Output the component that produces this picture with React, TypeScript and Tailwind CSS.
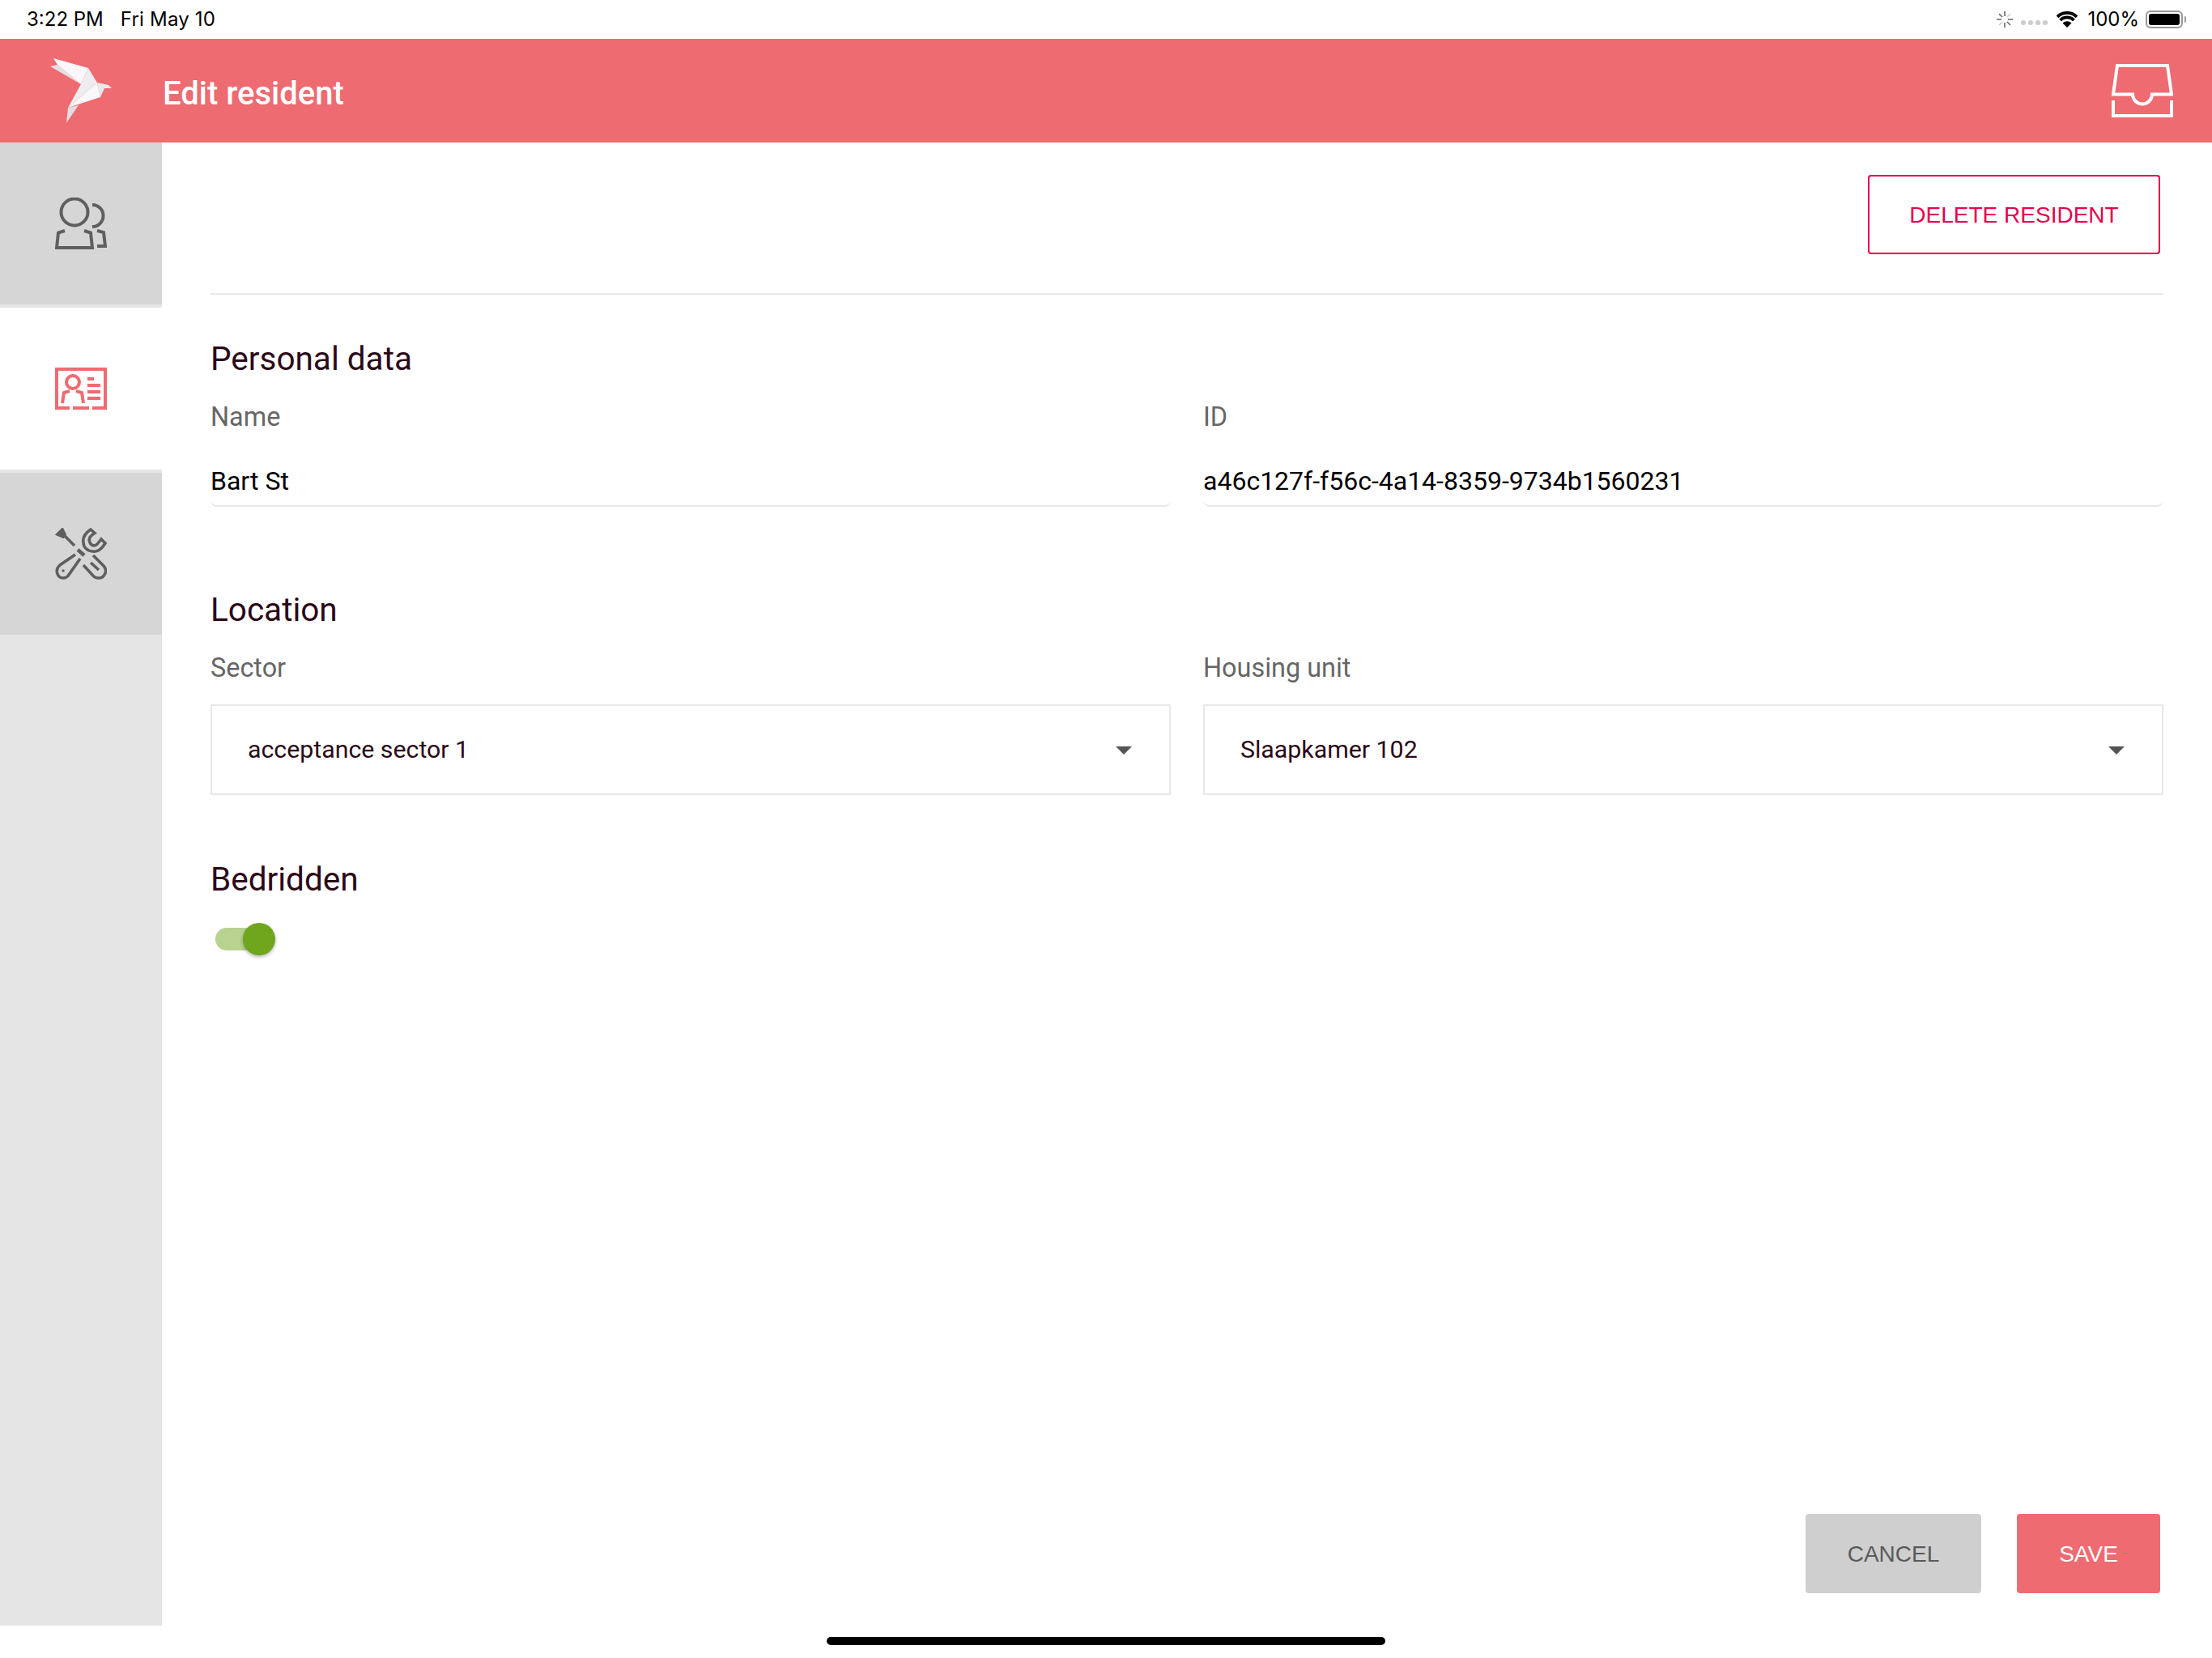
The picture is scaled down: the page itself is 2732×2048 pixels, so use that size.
const bodyFont = { fontFamily: 'Roboto, sans-serif' };

function Bird() {
  return (
    <svg width="76" height="80" viewBox="0 0 76 80" className="block">
      <polygon points="0,10 9,8 38,32" fill="#e4dfe3" />
      <polygon points="4,0 47,12 38,32 9,8" fill="#f9f7f9" />
      <polygon points="47,12 58,30 22,61 38,32" fill="#efecef" />
      <polygon points="58,30 62,48 22,61" fill="#f9f7f9" />
      <polygon points="58,30 72,33 76,37 67,37 62,48" fill="#ebe8eb" />
      <polygon points="22,61 35,58 20,80" fill="#e2dde1" />
    </svg>
  );
}

function InboxIcon() {
  return (
    <svg width="76" height="66" viewBox="0 0 76 66" fill="none" stroke="#fff" strokeWidth="4" className="block">
      <path d="M2 37.5 L7 2 H69 L74 37.5 H50 A12 12 0 0 1 26 37.5 Z" />
      <path d="M2 45 V64 H74 V45" />
    </svg>
  );
}

function PeopleIcon() {
  return (
    <svg width="64" height="64" viewBox="0 0 64 64" fill="none" stroke="#5f5f5f" strokeWidth="4" className="block">
      <circle cx="24" cy="18" r="16.5" />
      <path d="M46 9 A13.5 13.5 0 0 1 46 36" />
      <path d="M12 41 L4 43.5 L2 62 H46 L44 43.5 L36 41" />
      <path d="M52 41 L60 43 L62 60 H52" />
    </svg>
  );
}

function CardIcon() {
  return (
    <svg width="64" height="52" viewBox="0 0 64 52" fill="none" stroke="#ee6b71" strokeWidth="4" className="block">
      <path d="M18 50 H2 V2 H62 V50 H46 M22 50 H42" />
      <circle cx="22" cy="18" r="8" />
      <path d="M18 29 L11 31 L9 44 M26 29 L33 31 L35 44" />
      <path d="M40 14 H48 M40 22 H56 M40 30 H56 M40 38 H56" />
    </svg>
  );
}

function ToolsIcon() {
  return (
    <svg width="64" height="64" viewBox="0 0 64 64" fill="none" stroke="#5f5f5f" strokeWidth="3.6" className="block">
      <path d="M9 2 L3 8 L10 11 L12 8 Z" fill="#5f5f5f" />
      <path d="M12 10 L24 22" />
      <path d="M28 27 L36 34" strokeWidth="4.5" />
      <path d="M25 33 L6 46 C-1 52 3 62 10 62 C13 62 15 61 17 58 L31 38" />
      <path d="M8.5 51.5 H11.5 V54.5 H8.5 Z" fill="#5f5f5f" strokeWidth="0" />
      <path d="M44 2 L49 6.5 C43 10 41 14 43 18 C45 23 50 23 53 19 L57 14 L62 19 C57 27 52 30 47 29 C40 29 35 24 35 18 C34 12 38 6 44 2 Z" />
      <path d="M47 34 L60 47 C66 54 60 62 54 62 C51 62 48 61 46 58 L35 46" />
      <path d="M44 43 L54 52" />
    </svg>
  );
}

function TabItem({ active, children }: { active?: boolean; children: React.ReactNode }) {
  return (
    <div
      className={
        active
          ? 'flex h-[204px] items-center justify-center border-b-4 border-[#e5e5e5] bg-white'
          : 'flex h-[204px] items-center justify-center border-b-4 border-[#e5e5e5] bg-[#d6d6d6]'
      }
    >
      {children}
    </div>
  );
}

function TextField({ label, value }: { label: string; value: string }) {
  return (
    <div className="flex-1">
      <div className="h-[37px] text-[32.4px] leading-[37px] text-[#666]">{label}</div>
      <div className="mt-[42px] h-[50px] rounded-b-lg border-b-2 border-[#e8e8e8] text-[32px] leading-[37px] text-black">
        {value}
      </div>
    </div>
  );
}

function SelectField({ label, value }: { label: string; value: string }) {
  return (
    <div className="flex-1">
      <div className="h-[37px] text-[32.4px] leading-[37px] text-[#666]">{label}</div>
      <div className="mt-[26px] flex h-[112px] items-center justify-between border-2 border-[#e8e8e8] pl-[44px] pr-[46px] text-[30.3px] text-[#2b0a18]">
        <span>{value}</span>
        <span className="mt-0.5 h-0 w-0 border-x-[10px] border-t-[10px] border-x-transparent border-t-[#555]" />
      </div>
    </div>
  );
}

export default function App() {
  return (
    <div className="flex h-[2048px] w-[2732px] flex-col bg-white" style={bodyFont}>
      {/* Status bar */}
      <div
        className="flex h-12 items-center justify-between pl-[33px] pr-[32px] text-[24px] text-black"
        style={{ fontFamily: 'Inter, sans-serif' }}
      >
        <div className="flex gap-[21px]">
          <span>3:22 PM</span>
          <span className="tracking-[0.2px]">Fri May 10</span>
        </div>
        <div className="flex items-center">
          <svg width="20" height="20" viewBox="0 0 20 20" stroke="#666" strokeWidth="1.6" className="block">
            <path d="M10 0 V6 M10 14 V20 M0 10 H6 M14 10 H20 M3 3 L7 7 M13 13 L17 17" />
            <path d="M17 3 L13 7 M3 17 L7 13" stroke="#ccc" />
          </svg>
          <div className="mt-2 ml-[10px] flex gap-[3px]">
            <span className="h-[6px] w-[6px] rounded-full bg-[#ccc]" />
            <span className="h-[6px] w-[6px] rounded-full bg-[#ccc]" />
            <span className="h-[6px] w-[6px] rounded-full bg-[#ccc]" />
            <span className="h-[6px] w-[6px] rounded-full bg-[#ccc]" />
          </div>
          <svg width="28" height="20" viewBox="0 0 28 20" className="ml-[10px] block">
            <path d="M14 20 L8.5 14.5 A7.8 7.8 0 0 1 19.5 14.5 Z" fill="#000" />
            <path d="M5.5 11 A12 12 0 0 1 22.5 11 M2 6.8 A17 17 0 0 1 26 6.8" stroke="#000" strokeWidth="3.8" fill="none" />
          </svg>
          <span className="ml-[11px]">100%</span>
          <div className="ml-[8px] flex h-[22px] w-[46px] items-center rounded-[6px] border-2 border-[#999] p-[2px]">
            <div className="h-full w-full rounded-[3px] bg-black" />
          </div>
          <span className="ml-[2px] h-[8px] w-[2px] rounded-r-sm bg-[#999]" />
        </div>
      </div>

      {/* Header */}
      <div className="flex h-[128px] items-center justify-between bg-[#ed6b71] pr-[48px] text-white">
        <div className="flex items-center">
          <div className="ml-[62px] w-[139px]">
            <Bird />
          </div>
          <span className="mt-[7px] text-[40px] leading-none font-medium">Edit resident</span>
        </div>
        <InboxIcon />
      </div>

      <div className="flex min-h-0 flex-1">
        {/* Sidebar */}
        <div className="flex w-[200px] flex-col bg-[#e5e5e5]">
          <TabItem>
            <PeopleIcon />
          </TabItem>
          <TabItem active>
            <CardIcon />
          </TabItem>
          <div className="flex h-[200px] items-center justify-center bg-[#d6d6d6]">
            <ToolsIcon />
          </div>
          <div className="flex-1 border-r border-[#dcdcdc]" />
        </div>

        {/* Form */}
        <div className="flex min-w-0 flex-1 flex-col pt-10 pr-[60px] pl-[60px]">
          <div className="flex justify-end pr-[4px]">
            <button className="h-[98px] w-[361px] rounded border-2 border-[#e6004e] pt-px text-[28px] text-[#e6004e]" style={{ fontFamily: '"Liberation Sans", sans-serif' }}>
              DELETE RESIDENT
            </button>
          </div>
          <div className="mt-[48px] h-0.5 bg-[#e8e8e8]" />

          <h2 className="mt-[56px] h-[47px] text-[40.5px] leading-[47px] text-[#2b0a18]">Personal data</h2>
          <div className="mt-[30px] flex gap-10">
            <TextField label="Name" value="Bart St" />
            <TextField label="ID" value="a46c127f-f56c-4a14-8359-9734b1560231" />
          </div>

          <h2 className="mt-[104px] h-[47px] text-[40.5px] leading-[47px] text-[#2b0a18]">Location</h2>
          <div className="mt-[30px] flex gap-10">
            <SelectField label="Sector" value="acceptance sector 1" />
            <SelectField label="Housing unit" value="Slaapkamer 102" />
          </div>

          <h2 className="mt-[81px] h-[47px] text-[40.5px] leading-[47px] text-[#2b0a18]">Bedridden</h2>
          {/* Toggle */}
          <div className="relative mt-[36px] ml-[6px] h-[28px] w-[68px] rounded-full bg-[#b7d38f]">
            <span className="absolute -top-[6px] left-[34px] h-10 w-10 rounded-full bg-[#6fa61e] shadow-[0_2px_4px_rgba(0,0,0,0.3)]" />
          </div>

          <div className="mt-auto mb-[40px] flex justify-end gap-[44px] pr-[4px] text-[28px]" style={{ fontFamily: '"Liberation Sans", sans-serif' }}>
            <button className="h-[98px] w-[217px] rounded bg-[#cfcfcf] pt-px text-[#5a5a5a]">CANCEL</button>
            <button className="h-[98px] w-[177px] rounded bg-[#ed6b71] pt-px text-white">SAVE</button>
          </div>
        </div>
      </div>

      {/* Home indicator */}
      <div className="flex h-10 shrink-0 items-start justify-center pt-[14px]">
        <div className="h-[10px] w-[690px] rounded-full bg-black" />
      </div>
    </div>
  );
}
